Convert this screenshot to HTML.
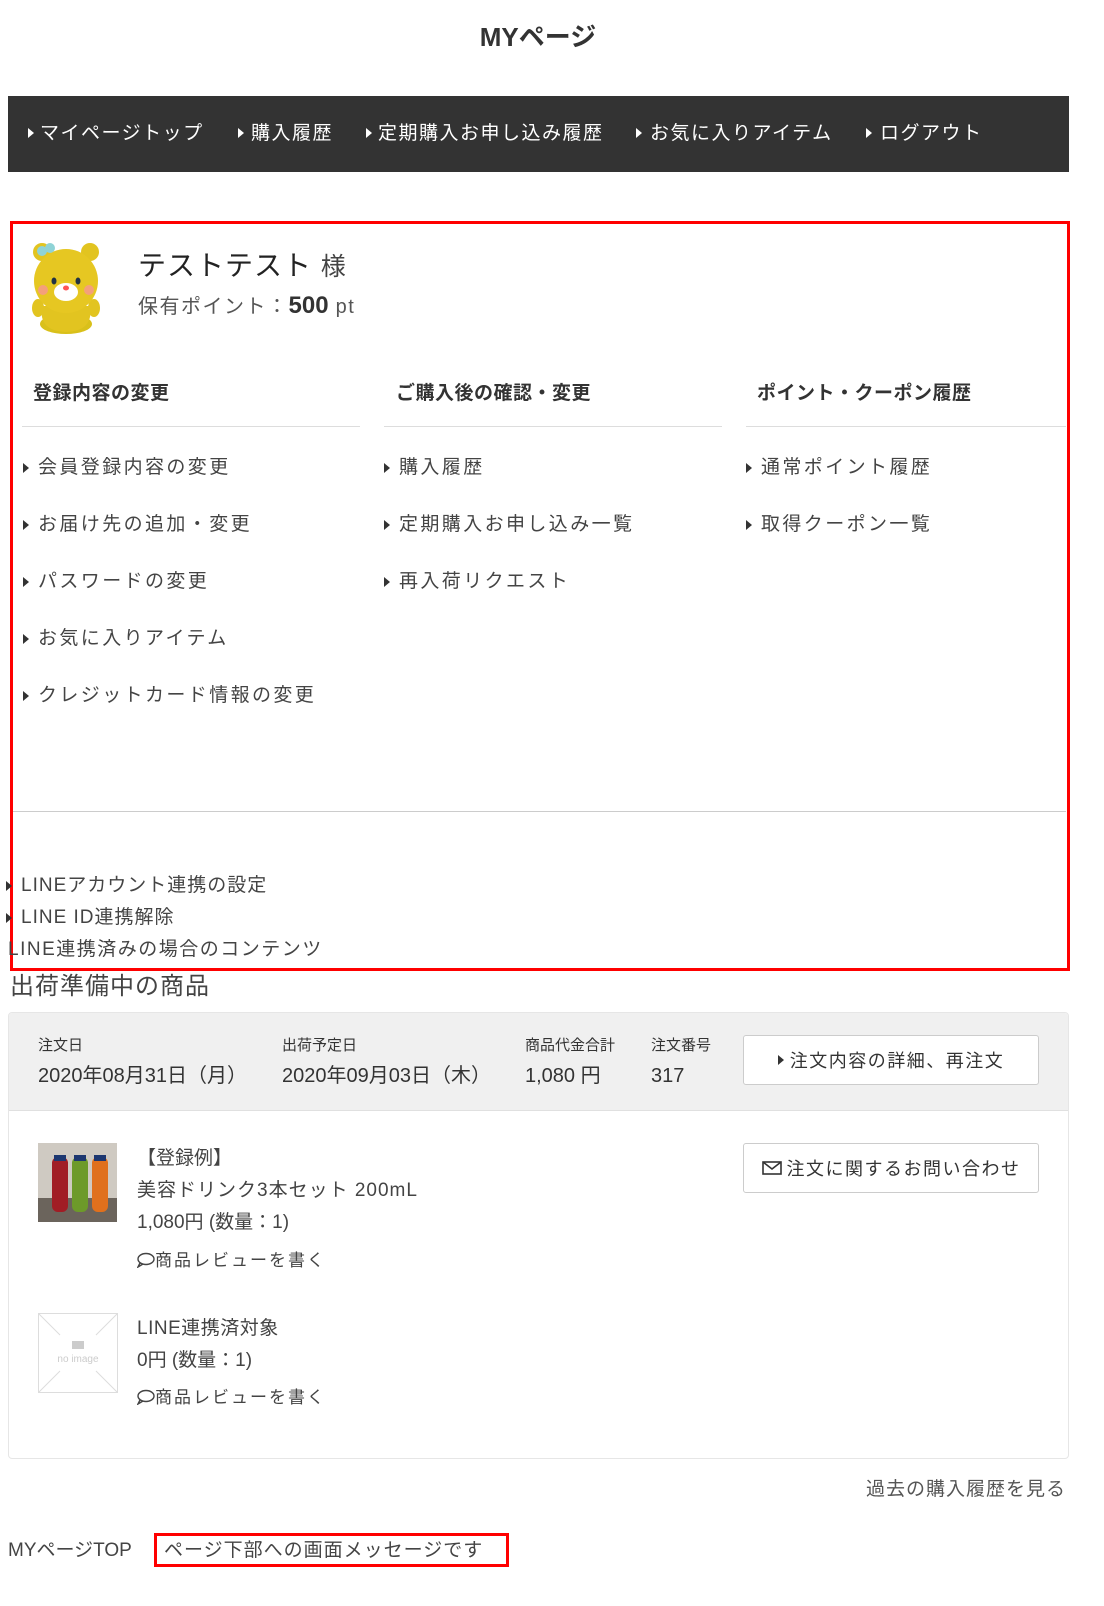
<!DOCTYPE html>
<html><head><meta charset="utf-8"><style>
*{margin:0;padding:0;box-sizing:border-box}
body{width:1104px;height:1606px;background:#fff;position:relative;overflow:hidden;font-family:"Liberation Sans","Noto Sans CJK JP",sans-serif;color:#333}
.t{position:absolute;white-space:nowrap;line-height:1}
.tri{position:absolute;width:0;height:0;border-top:5px solid transparent;border-bottom:5px solid transparent;border-left:6px solid #333}
.nav .t{color:#fff;font-size:19px;letter-spacing:1.5px;top:124px}
.nav .tri{border-left-color:#fff;top:128px}
.it{font-size:19px;letter-spacing:2.4px;color:#444}
.hd{font-size:19px;font-weight:bold;letter-spacing:.5px;top:384px}
.ln{position:absolute;height:1px;background:#ddd;top:426px}
.btn{position:absolute;background:#fff;border:1px solid #ccc;border-radius:3px;left:743px;width:296px;height:50px;font-size:18px;letter-spacing:1.5px;display:flex;align-items:center;justify-content:center;color:#333}
</style></head><body>
<div class="t" style="left:0;width:1076px;text-align:center;top:24px;font-size:26px;font-weight:bold">MYページ</div>

<div class="nav" style="position:absolute;left:8px;top:96px;width:1061px;height:76px;background:#333"></div>
<div class="nav">
<div class="tri" style="left:28px"></div><div class="t" style="left:40px">マイページトップ</div>
<div class="tri" style="left:238px"></div><div class="t" style="left:251px">購入履歴</div>
<div class="tri" style="left:366px"></div><div class="t" style="left:378px">定期購入お申し込み履歴</div>
<div class="tri" style="left:636px"></div><div class="t" style="left:650px">お気に入りアイテム</div>
<div class="tri" style="left:866px"></div><div class="t" style="left:880px">ログアウト</div>
</div>

<div style="position:absolute;left:10px;top:221px;width:1060px;height:750px;border:3px solid #f00"></div>

<svg style="position:absolute;left:28px;top:236px" width="76" height="98" viewBox="0 0 76 98">
<ellipse cx="38" cy="88" rx="26" ry="10" fill="#d9c01a"/>
<path d="M14 70 Q10 95 38 96 Q66 95 62 70 Z" fill="#e2c420"/>
<ellipse cx="10" cy="72" rx="6" ry="9" fill="#e2c420"/>
<ellipse cx="66" cy="72" rx="6" ry="9" fill="#e2c420"/>
<circle cx="14" cy="16" r="9" fill="#e2c420"/><circle cx="62" cy="16" r="9" fill="#e2c420"/>
<ellipse cx="38" cy="45" rx="32" ry="32" fill="#e6c722"/>
<circle cx="14" cy="15" r="5" fill="#8fd3d6"/><circle cx="22" cy="12" r="5" fill="#8fd3d6"/>
<ellipse cx="26" cy="45" rx="2.5" ry="3.5" fill="#234"/><ellipse cx="50" cy="45" rx="2.5" ry="3.5" fill="#234"/>
<circle cx="15" cy="54" r="5" fill="#f4a07a"/><circle cx="61" cy="54" r="5" fill="#f4a07a"/>
<ellipse cx="38" cy="56" rx="12" ry="9" fill="#fff"/>
<ellipse cx="38" cy="52" rx="3" ry="2.5" fill="#f55"/>
</svg>
<div class="t" style="left:138px;top:252px;font-size:28px;letter-spacing:1px;color:#222">テストテスト <span style="font-size:25px;color:#444">様</span></div>
<div class="t" style="left:138px;top:294px;font-size:20px;letter-spacing:1.5px;color:#555">保有ポイント：<b style="font-size:24px;color:#333;letter-spacing:0">500</b> pt</div>

<div class="t hd" style="left:33px">登録内容の変更</div>
<div class="t hd" style="left:396px">ご購入後の確認・変更</div>
<div class="t hd" style="left:757px">ポイント・クーポン履歴</div>
<div class="ln" style="left:22px;width:338px"></div>
<div class="ln" style="left:384px;width:338px"></div>
<div class="ln" style="left:746px;width:320px"></div>

<div class="tri" style="left:23px;top:463px"></div><div class="t it" style="left:38px;top:458px">会員登録内容の変更</div>
<div class="tri" style="left:23px;top:520px"></div><div class="t it" style="left:38px;top:515px">お届け先の追加・変更</div>
<div class="tri" style="left:23px;top:577px"></div><div class="t it" style="left:38px;top:572px">パスワードの変更</div>
<div class="tri" style="left:23px;top:634px"></div><div class="t it" style="left:38px;top:629px">お気に入りアイテム</div>
<div class="tri" style="left:23px;top:691px"></div><div class="t it" style="left:38px;top:686px">クレジットカード情報の変更</div>

<div class="tri" style="left:384px;top:463px"></div><div class="t it" style="left:399px;top:458px">購入履歴</div>
<div class="tri" style="left:384px;top:520px"></div><div class="t it" style="left:399px;top:515px">定期購入お申し込み一覧</div>
<div class="tri" style="left:384px;top:577px"></div><div class="t it" style="left:399px;top:572px">再入荷リクエスト</div>

<div class="tri" style="left:746px;top:463px"></div><div class="t it" style="left:761px;top:458px">通常ポイント履歴</div>
<div class="tri" style="left:746px;top:520px"></div><div class="t it" style="left:761px;top:515px">取得クーポン一覧</div>

<div style="position:absolute;left:13px;top:811px;width:1053px;height:1px;background:#ccc"></div>

<div class="tri" style="left:6px;top:881px"></div><div class="t" style="left:21px;top:876px;font-size:19px;letter-spacing:1px;color:#444">LINEアカウント連携の設定</div>
<div class="tri" style="left:6px;top:913px"></div><div class="t" style="left:21px;top:908px;font-size:19px;letter-spacing:1px;color:#444">LINE ID連携解除</div>
<div class="t" style="left:8px;top:940px;font-size:19px;letter-spacing:1.5px;color:#444">LINE連携済みの場合のコンテンツ</div>

<div class="t" style="left:10px;top:975px;font-size:24px;letter-spacing:1px;color:#444">出荷準備中の商品</div>

<div style="position:absolute;left:8px;top:1012px;width:1061px;height:447px;border:1px solid #e6e6e6;border-radius:4px;overflow:hidden">
<div style="height:98px;background:#f0f0f0;border-bottom:1px solid #e0e0e0"></div>
</div>
<div class="t" style="left:38px;top:1038px;font-size:15px">注文日</div>
<div class="t" style="left:282px;top:1038px;font-size:15px">出荷予定日</div>
<div class="t" style="left:525px;top:1038px;font-size:15px">商品代金合計</div>
<div class="t" style="left:651px;top:1038px;font-size:15px">注文番号</div>
<div class="t" style="left:38px;top:1066px;font-size:20px">2020年08月31日（月）</div>
<div class="t" style="left:282px;top:1066px;font-size:20px">2020年09月03日（木）</div>
<div class="t" style="left:525px;top:1066px;font-size:20px">1,080 円</div>
<div class="t" style="left:651px;top:1066px;font-size:20px">317</div>
<div class="btn" style="top:1035px"><span class="tri" style="position:relative;display:inline-block;margin-right:6px"></span>注文内容の詳細、再注文</div>
<div class="btn" style="top:1143px"><svg width="20" height="16" viewBox="0 0 20 16" style="margin-right:5px"><rect x="1" y="2" width="18" height="12" fill="none" stroke="#333" stroke-width="1.6"/><path d="M1 2 L10 9 L19 2" fill="none" stroke="#333" stroke-width="1.6"/></svg>注文に関するお問い合わせ</div>

<svg style="position:absolute;left:38px;top:1143px" width="79" height="79" viewBox="0 0 79 79">
<rect width="79" height="79" fill="#cfcac2"/><rect y="55" width="79" height="24" fill="#6b645c"/>
<rect x="14" y="14" width="16" height="55" rx="6" fill="#a11d25"/><rect x="34" y="14" width="16" height="55" rx="6" fill="#6d9a2a"/><rect x="54" y="14" width="16" height="55" rx="6" fill="#e0701d"/>
<rect x="16" y="12" width="12" height="6" fill="#1d3770"/><rect x="36" y="12" width="12" height="6" fill="#1d3770"/><rect x="56" y="12" width="12" height="6" fill="#1d3770"/>
</svg>
<div class="t" style="left:137px;top:1149px;font-size:19px;color:#444">【登録例】</div>
<div class="t" style="left:137px;top:1181px;font-size:19px;letter-spacing:1px;color:#444">美容ドリンク3本セット 200mL</div>
<div class="t" style="left:137px;top:1213px;font-size:19px;color:#444">1,080円 (数量：1)</div>
<div class="t" style="left:137px;top:1252px;font-size:17px;letter-spacing:2px;color:#444"><svg width="18" height="16" viewBox="0 0 18 16" style="vertical-align:-2px"><ellipse cx="9" cy="7" rx="8" ry="5.5" fill="none" stroke="#444" stroke-width="1.4"/><path d="M3 11 L1 15 L6 12" fill="none" stroke="#444" stroke-width="1.4"/></svg>商品レビューを書く</div>

<svg style="position:absolute;left:38px;top:1313px" width="80" height="80" viewBox="0 0 80 80">
<rect x=".5" y=".5" width="79" height="79" fill="#fff" stroke="#ddd"/>
<path d="M1 1 L22 22 M79 1 L58 22 M1 79 L22 58 M79 79 L58 58" stroke="#ddd"/>
<rect x="34" y="28" width="12" height="8" fill="#ccc"/>
<text x="40" y="49" font-size="10" text-anchor="middle" fill="#ccc" font-family="Liberation Sans">no image</text>
</svg>
<div class="t" style="left:137px;top:1319px;font-size:19px;letter-spacing:.5px;color:#444">LINE連携済対象</div>
<div class="t" style="left:137px;top:1351px;font-size:19px;color:#444">0円 (数量：1)</div>
<div class="t" style="left:137px;top:1389px;font-size:17px;letter-spacing:2px;color:#444"><svg width="18" height="16" viewBox="0 0 18 16" style="vertical-align:-2px"><ellipse cx="9" cy="7" rx="8" ry="5.5" fill="none" stroke="#444" stroke-width="1.4"/><path d="M3 11 L1 15 L6 12" fill="none" stroke="#444" stroke-width="1.4"/></svg>商品レビューを書く</div>

<div class="t" style="right:38px;top:1480px;font-size:19px;letter-spacing:1px;color:#555">過去の購入履歴を見る</div>

<div class="t" style="left:8px;top:1541px;font-size:19px;color:#444">MYページTOP</div>
<div style="position:absolute;left:154px;top:1533px;width:355px;height:34px;border:3px solid #f00"></div>
<div class="t" style="left:164px;top:1541px;font-size:19px;letter-spacing:1px;color:#444">ページ下部への画面メッセージです</div>
</body></html>
